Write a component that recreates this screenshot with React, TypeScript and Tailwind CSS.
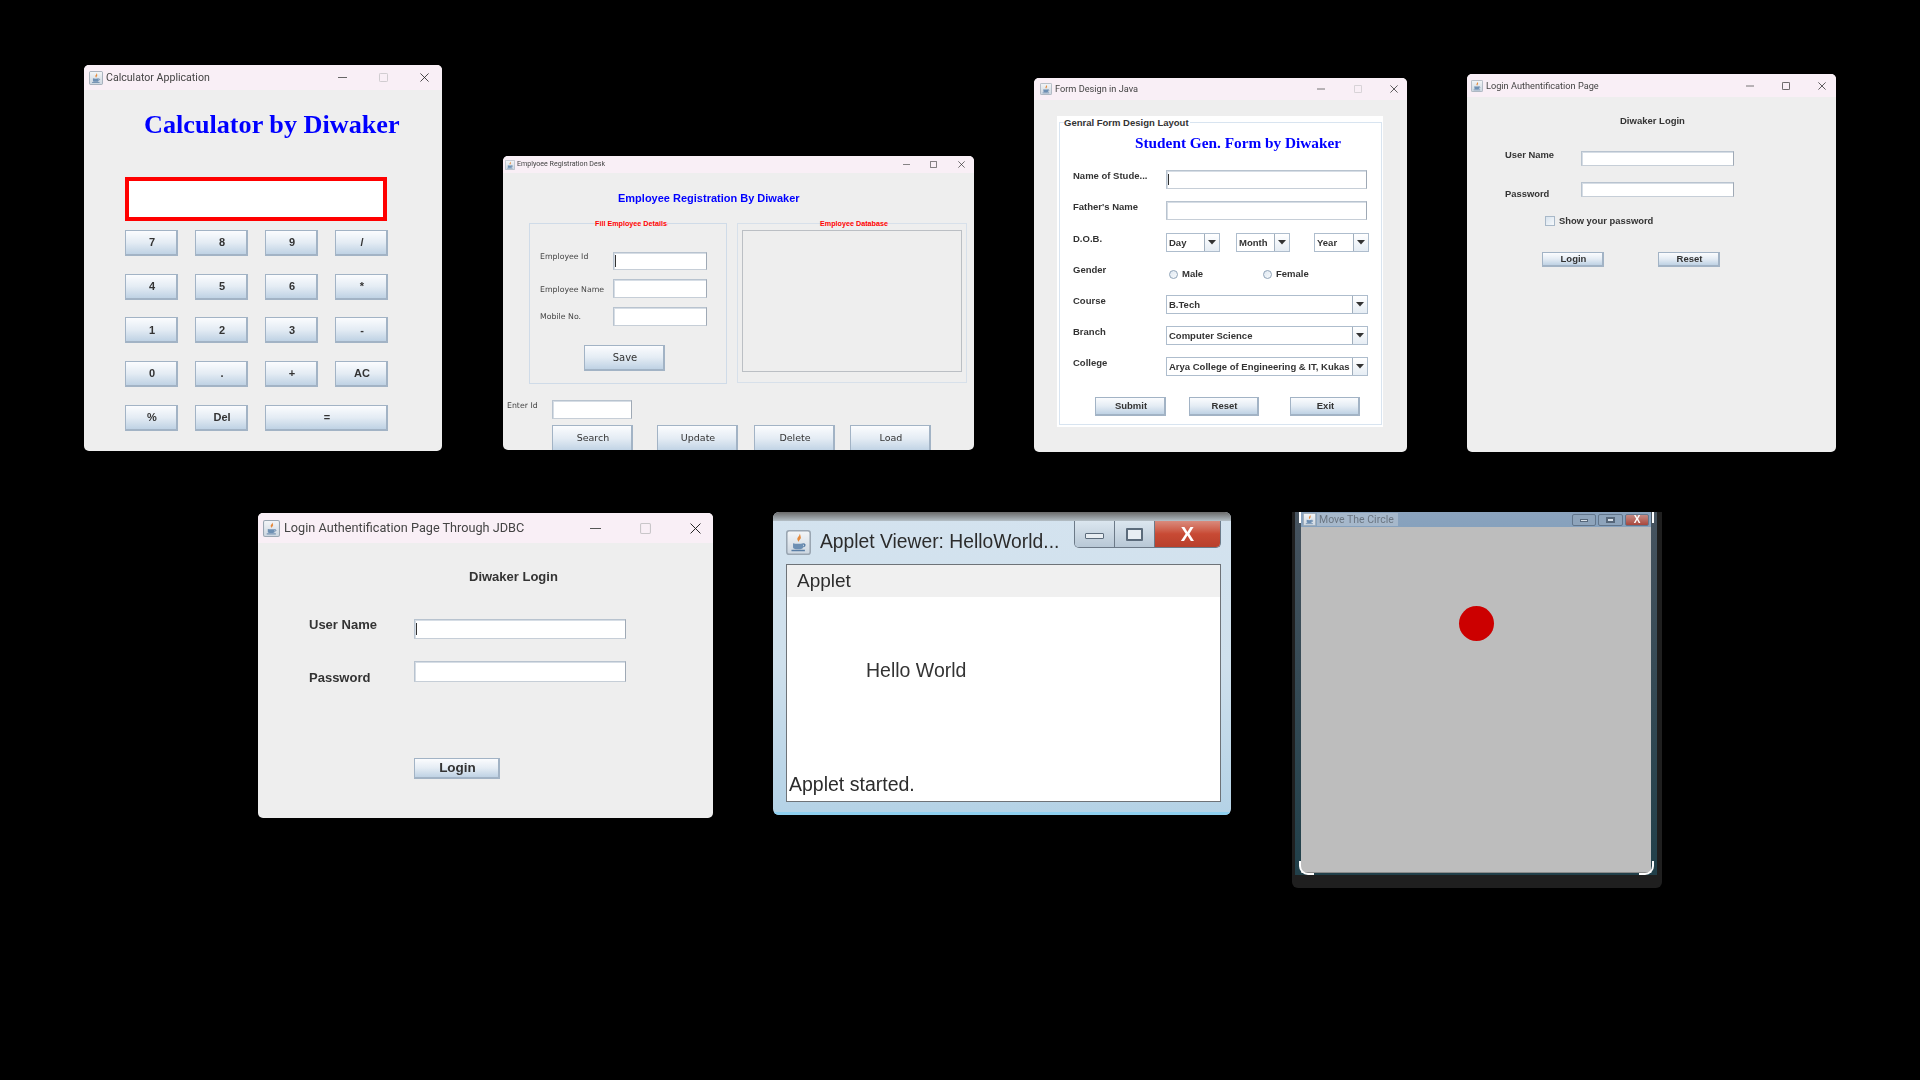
import React from "react";

function JavaIcon({ size }: { size: number }) {
  return (
    <svg width={size} height={size} viewBox="0 0 16 16" className="shrink-0">
      <defs>
        <linearGradient id="jt" x1="0" y1="0" x2="0" y2="1">
          <stop offset="0" stopColor="#f4f6f8" />
          <stop offset="1" stopColor="#ccd6e0" />
        </linearGradient>
      </defs>
      <rect x="0.5" y="0.5" width="15" height="15" rx="1.5" fill="url(#jt)" stroke="#9aa6b2" />
      <path d="M8.6 2.2c.7 1.5-1.8 2.3-1.3 4 .2.6.6 1 .9 1.4-.1-1.2 2-2 1.1-3.6 0-.7-.2-1.3-.7-1.8z" fill="#e58a3c" />
      <path d="M4.5 8.4c1.5.5 5 .5 6.4 0v2.6c0 1-1 1.3-3.2 1.3s-3.2-.3-3.2-1.3z" fill="#6d8fb3" />
      <path d="M10.9 9c1.3-.3 1.8 1.2.2 1.8M3.5 13.1h8.6" fill="none" stroke="#5a7ea5" strokeWidth="0.9" />
    </svg>
  );
}

function Controls({ size, cls, maxOn }: { size: number; cls: string; maxOn?: boolean }) {
  return (
    <div className={"ml-auto flex items-center " + cls}>
      <svg width={size} height={size} viewBox="0 0 10 10">
        <path d="M0 5h10" stroke="#555" strokeWidth="1" />
      </svg>
      <svg width={size} height={size} viewBox="0 0 10 10">
        <rect x="0.5" y="0.5" width="9" height="9" rx="1" fill="none" stroke={maxOn ? "#333" : "#c9c6c9"} strokeWidth="1" />
      </svg>
      <svg width={size} height={size} viewBox="0 0 10 10">
        <path d="M0.5 0.5l9 9M9.5 0.5l-9 9" stroke="#222" strokeWidth="0.9" />
      </svg>
    </div>
  );
}

function Win({
  pos,
  bar,
  iconSize,
  title,
  titleCls,
  ctrlSize,
  ctrlCls,
  maxOn,
  children,
}: {
  pos: string;
  bar: string;
  iconSize: number;
  title: string;
  titleCls: string;
  ctrlSize: number;
  ctrlCls: string;
  maxOn?: boolean;
  children: React.ReactNode;
}) {
  return (
    <div className={"absolute overflow-hidden rounded-[5px] bg-[#eeeeee] blur-[0.35px] flex flex-col font-['Liberation_Sans',sans-serif] " + pos}>
      <div className={"flex shrink-0 items-center bg-[#f9eff6] " + bar}>
        <JavaIcon size={iconSize} />
        <span className={"whitespace-nowrap font-['Roboto',sans-serif] text-[#444] " + titleCls}>{title}</span>
        <Controls size={ctrlSize} cls={ctrlCls} maxOn={maxOn} />
      </div>
      {children}
    </div>
  );
}

function Btn({ cls, children }: { cls: string; children: React.ReactNode }) {
  return (
    <div className={"flex shrink-0 items-center justify-center border border-[#a2b3c5] border-b-2 border-r-2 bg-linear-to-b from-[#fbfcfe] via-[#e4ecf4] to-[#bfd2e4] pl-[2px] text-[#333] " + cls}>
      {children}
    </div>
  );
}

function Field({ cls, caret }: { cls: string; caret?: boolean }) {
  return (
    <div className={"flex shrink-0 items-center border border-[#b8c3cf] border-b-[#c6ced7] border-r-[#9fa9b5] bg-white shadow-[inset_1px_1px_0_#d6dde5] " + cls}>
      {caret && <div className="ml-[1px] h-[70%] w-[1px] bg-[#333]" />}
    </div>
  );
}

function Combo({ cls, text }: { cls: string; text: string }) {
  return (
    <div className={"flex h-[19px] shrink-0 items-stretch border border-[#aebdcd] bg-white text-[9.5px] font-bold text-[#333] " + cls}>
      <span className="flex-1 overflow-hidden whitespace-nowrap pl-[2px] leading-[18px]">{text}</span>
      <div className="flex w-[15px] items-center justify-center border-l border-[#a0aebc] bg-linear-to-b from-white to-[#e6edf4]">
        <svg width="8" height="5" viewBox="0 0 8 5">
          <path d="M0 0h8L4 4.5z" fill="#333" />
        </svg>
      </div>
    </div>
  );
}

function Radio() {
  return <div className="h-[9px] w-[9px] shrink-0 rounded-full border border-[#8fa3b8] bg-linear-to-br from-[#dfe8f1] to-[#f8fafc]" />;
}

function Calculator() {
  const rows = [
    ["7", "8", "9", "/"],
    ["4", "5", "6", "*"],
    ["1", "2", "3", "-"],
    ["0", ".", "+", "AC"],
  ];
  return (
    <Win
      pos="left-[84px] top-[65px] w-[358px] h-[386px]"
      bar="h-[25px] pl-[5px]"
      iconSize={14}
      title="Calculator Application"
      titleCls="ml-[3px] text-[10.6px]"
      ctrlSize={9}
      ctrlCls="gap-[32px] pr-[13px]"
    >
      <div className="flex flex-col pl-[41px]">
        <div className="ml-[19px] mt-[20px] h-[30px] whitespace-nowrap font-['Liberation_Serif',serif] text-[26.2px] font-bold leading-[30px] text-[#0000ff]">
          Calculator by Diwaker
        </div>
        <div className="mt-[37px] h-[44px] w-[262px] border-[4.5px] border-[#ff0000] bg-white" />
        <div className="mt-[9px] grid w-[263px] grid-cols-[53px_53px_53px_53px] gap-x-[17px] gap-y-[17.7px] text-[11px] font-bold">
          {rows.flat().map((k) => (
            <Btn key={k} cls="h-[26px]">
              {k}
            </Btn>
          ))}
          <Btn cls="h-[26px]">%</Btn>
          <Btn cls="h-[26px]">Del</Btn>
          <Btn cls="col-span-2 h-[26px]">=</Btn>
        </div>
      </div>
    </Win>
  );
}

function Employee() {
  return (
    <Win
      pos="left-[503px] top-[156px] w-[471px] h-[294px]"
      bar="h-[17px] pl-[2px]"
      iconSize={10}
      title="Emplyoee Registration Desk"
      titleCls="ml-[2px] text-[7.1px]"
      ctrlSize={7}
      ctrlCls="gap-[20.5px] pr-[9.5px]"
      maxOn
    >
      <div className="ml-[115px] mt-[18px] h-[14px] whitespace-nowrap text-[11px] font-bold leading-[14px] text-[#0000ff]">
        Employee Registration By Diwaker
      </div>
      <div className="ml-[26px] mt-[18px] flex gap-[10px]">
        <div className="relative h-[161px] w-[198px] shrink-0 border border-[#cfdbe8] pl-[10px] pt-[28px]">
          <span className="absolute left-[65px] top-[-5px] bg-[#eeeeee] text-[7.2px] font-bold leading-[9px] text-[#ff0000]">
            Fill Employee Details
          </span>
          <div className="grid grid-cols-[73px_94px] grid-rows-[18px_19px_19px] gap-y-[9px] font-['DejaVu_Sans',sans-serif] text-[7.8px] text-[#444]">
            <span className="-translate-y-[4px] self-center whitespace-nowrap">Employee Id</span>
            <Field cls="h-[18px]" caret />
            <span className="translate-y-[1px] self-center whitespace-nowrap">Employee Name</span>
            <Field cls="h-[19px]" />
            <span className="self-center whitespace-nowrap">Mobile No.</span>
            <Field cls="h-[19px]" />
          </div>
          <Btn cls="ml-[44px] mt-[19px] h-[26px] w-[81px] text-[10px] font-['DejaVu_Sans',sans-serif]">Save</Btn>
        </div>
        <div className="relative h-[160px] w-[230px] shrink-0 border border-[#d7e0ea] px-[4px] pt-[6px]">
          <span className="absolute left-[82px] top-[-5px] bg-[#eeeeee] text-[7.2px] font-bold leading-[9px] text-[#ff0000]">
            Employee Database
          </span>
          <div className="h-[142px] w-[220px] border border-[#bbbfc4]" />
        </div>
      </div>
      <div className="mt-[16px] flex items-start pl-[4px]">
        <span className="mt-[1px] w-[45px] font-['DejaVu_Sans',sans-serif] text-[7.8px] leading-[10px] text-[#444]">Enter Id</span>
        <Field cls="h-[19px] w-[80px]" />
      </div>
      <div className="ml-[49px] mt-[6px] flex font-['DejaVu_Sans',sans-serif] text-[9.5px]">
        <Btn cls="h-[28px] w-[81px]">Search</Btn>
        <Btn cls="ml-[24px] h-[28px] w-[81px]">Update</Btn>
        <Btn cls="ml-[16px] h-[28px] w-[81px]">Delete</Btn>
        <Btn cls="ml-[15px] h-[28px] w-[81px]">Load</Btn>
      </div>
    </Win>
  );
}

function FormRow({ label, children, cls }: { label: string; children: React.ReactNode; cls: string }) {
  return (
    <div className={"flex h-[19px] items-start " + cls}>
      <span className="w-[93px] shrink-0 whitespace-nowrap text-[9.5px] font-bold leading-[11px] text-[#333]">{label}</span>
      {children}
    </div>
  );
}

function FormDesign() {
  return (
    <Win
      pos="left-[1034px] top-[78px] w-[373px] h-[374px]"
      bar="h-[22px] pl-[6px]"
      iconSize={12}
      title="Form Design in Java"
      titleCls="ml-[3px] text-[9.2px]"
      ctrlSize={8}
      ctrlCls="gap-[28.5px] pr-[9px]"
    >
      <div className="ml-[23px] mt-[16px] h-[311px] w-[326px] bg-white px-[2px] pt-[6px]">
        <div className="relative h-[303px] w-[323px] border border-[#d8e4f0] pl-[13px]">
          <span className="absolute left-[4px] top-[-6px] bg-white pr-[1px] text-[9.5px] font-bold leading-[12px] text-[#333]">
            Genral Form Design Layout
          </span>
          <div className="ml-[62px] mt-[10px] h-[20px] whitespace-nowrap font-['Liberation_Serif',serif] text-[15.3px] font-bold leading-[20px] text-[#0000ff]">
            Student Gen. Form by Diwaker
          </div>
          <FormRow label="Name of Stude..." cls="mt-[17px]">
            <Field cls="h-[19px] w-[201px]" caret />
          </FormRow>
          <FormRow label="Father's Name" cls="mt-[12px]">
            <Field cls="h-[19px] w-[201px]" />
          </FormRow>
          <FormRow label="D.O.B." cls="mt-[13px]">
            <Combo cls="w-[54px]" text="Day" />
            <Combo cls="ml-[16px] w-[54px]" text="Month" />
            <Combo cls="ml-[24px] w-[55px]" text="Year" />
          </FormRow>
          <FormRow label="Gender" cls="mt-[12px]">
            <div className="flex w-[97px] items-center pl-[3px] pt-[4px] text-[9.5px] font-bold leading-[12px] text-[#333]">
              <Radio />
              <span className="ml-[4px]">Male</span>
            </div>
            <div className="flex items-center pt-[4px] text-[9.5px] font-bold leading-[12px] text-[#333]">
              <Radio />
              <span className="ml-[4px]">Female</span>
            </div>
          </FormRow>
          <FormRow label="Course" cls="mt-[12px]">
            <Combo cls="w-[202px]" text="B.Tech" />
          </FormRow>
          <FormRow label="Branch" cls="mt-[12px]">
            <Combo cls="w-[202px]" text="Computer Science" />
          </FormRow>
          <FormRow label="College" cls="mt-[12px]">
            <Combo cls="w-[202px]" text="Arya College of Engineering & IT, Kukas" />
          </FormRow>
          <div className="ml-[22px] mt-[21px] flex text-[9.5px] font-bold">
            <Btn cls="h-[19px] w-[71px]">Submit</Btn>
            <Btn cls="ml-[23px] h-[19px] w-[70px]">Reset</Btn>
            <Btn cls="ml-[31px] h-[19px] w-[70px]">Exit</Btn>
          </div>
        </div>
      </div>
    </Win>
  );
}

function Login() {
  return (
    <Win
      pos="left-[1467px] top-[74px] w-[369px] h-[378px]"
      bar="h-[23px] pl-[4px]"
      iconSize={12}
      title="Login Authentification Page"
      titleCls="ml-[3px] text-[9.2px]"
      ctrlSize={8}
      ctrlCls="gap-[28px] pr-[10px]"
      maxOn
    >
      <div className="flex flex-col pl-[38px] font-bold text-[#333]">
        <div className="ml-[115px] mt-[18px] h-[12px] whitespace-nowrap text-[9.5px] leading-[12px]">Diwaker Login</div>
        <div className="mt-[24px] flex h-[15px]">
          <span className="w-[76px] shrink-0 -translate-y-[2px] text-[9.4px] leading-[12px]">User Name</span>
          <Field cls="h-[15px] w-[153px]" />
        </div>
        <div className="mt-[16px] flex h-[15px]">
          <span className="w-[76px] shrink-0 translate-y-[6px] text-[9.4px] leading-[12px]">Password</span>
          <Field cls="h-[15px] w-[153px]" />
        </div>
        <div className="ml-[40px] mt-[19px] flex h-[10px] items-center text-[9.4px]">
          <div className="h-[10px] w-[10px] border border-[#a8b8c8] bg-linear-to-br from-[#d8e3ee] to-[#f6f9fb]" />
          <span className="ml-[4px] whitespace-nowrap">Show your password</span>
        </div>
        <div className="ml-[37px] mt-[26px] flex text-[9.5px]">
          <Btn cls="h-[15px] w-[62px]">Login</Btn>
          <Btn cls="ml-[54px] h-[15px] w-[62px]">Reset</Btn>
        </div>
      </div>
    </Win>
  );
}

function Jdbc() {
  return (
    <Win
      pos="left-[258px] top-[513px] w-[455px] h-[305px]"
      bar="h-[30px] pl-[5px]"
      iconSize={17}
      title="Login Authentification Page Through JDBC"
      titleCls="ml-[4px] text-[12.7px]"
      ctrlSize={11}
      ctrlCls="gap-[39px] pr-[12.5px]"
    >
      <div className="flex flex-col pl-[51px] font-bold text-[#333]">
        <div className="ml-[160px] mt-[26px] h-[16px] whitespace-nowrap text-[13px] leading-[16px]">Diwaker Login</div>
        <div className="mt-[34px] flex h-[20px]">
          <span className="w-[105px] shrink-0 -translate-y-[2px] text-[13px] leading-[16px]">User Name</span>
          <Field cls="h-[20px] w-[212px]" caret />
        </div>
        <div className="mt-[22px] flex h-[21px]">
          <span className="w-[105px] shrink-0 translate-y-[9px] text-[13px] leading-[16px]">Password</span>
          <Field cls="h-[21px] w-[212px]" />
        </div>
        <Btn cls="ml-[105px] mt-[76px] h-[21px] w-[86px] text-[13.5px]">Login</Btn>
      </div>
    </Win>
  );
}

function Applet() {
  return (
    <div className="absolute left-[773px] top-[512px] flex h-[303px] w-[458px] flex-col overflow-hidden rounded-[6px] bg-linear-to-b from-[#d4e3ef] via-[#cfe0ec] to-[#b4d2e6] font-['Liberation_Sans',sans-serif] blur-[0.5px]">
      <div className="h-[9px] shrink-0 bg-linear-to-b from-[#6a6a6a] to-[#b4bfc6]" />
      <div className="flex h-[43px] shrink-0 items-start pl-[13px] pr-[10px]">
        <div className="mt-[9px]">
          <JavaIcon size={25} />
        </div>
        <span className="ml-[9px] mt-[9px] whitespace-nowrap text-[19.3px] leading-[24px] text-[#2c2c2c]">Applet Viewer: HelloWorld...</span>
        <div className="ml-auto flex h-[27px] w-[147px] shrink-0 overflow-hidden rounded-b-[5px] border border-t-0 border-[#6c7a88]">
          <div className="flex w-[40px] shrink-0 items-center justify-center border-r border-[#6c7a88] bg-linear-to-b from-[#dbe6ef] to-[#b8c8d6]">
            <div className="mt-[3px] h-[6px] w-[19px] rounded-[1px] border border-[#5b6b7b] bg-[#e8eef3]" />
          </div>
          <div className="flex w-[40px] shrink-0 items-center justify-center border-r border-[#6c7a88] bg-linear-to-b from-[#dbe6ef] to-[#b8c8d6]">
            <div className="h-[13px] w-[17px] rounded-[1px] border-2 border-[#5b6b7b] bg-[#e8eef3]" />
          </div>
          <div className="flex flex-1 items-center justify-center bg-linear-to-b from-[#d98a7c] via-[#c84a34] to-[#b8402c] text-[20px] font-bold leading-none text-white">
            X
          </div>
        </div>
      </div>
      <div className="mb-[10px] ml-[13px] mr-[10px] flex flex-1 flex-col border border-[#6e7378] bg-white">
        <div className="flex h-[32px] shrink-0 items-center bg-[#f0f0f0] pl-[10px] text-[19px] text-[#2c2c2c]">Applet</div>
        <div className="ml-[79px] mt-[61px] h-[24px] whitespace-nowrap text-[19.5px] leading-[24px] text-[#333]">Hello World</div>
        <div className="mb-[5px] ml-[2px] mt-auto h-[24px] whitespace-nowrap text-[19.5px] leading-[24px] text-[#2c2c2c]">Applet started.</div>
      </div>
      <div className="h-[3px] shrink-0 bg-[#8fd0f0]" />
    </div>
  );
}

function Circle() {
  return (
    <div className="absolute left-[1292px] top-[512px] h-[376px] w-[370px] overflow-hidden rounded-b-[6px] bg-[#1f1f1f] font-['Liberation_Sans',sans-serif] blur-[0.4px]">
      <div className="relative ml-[3px] flex h-[363px] w-[362px] flex-col bg-linear-to-b from-[#46535f] to-[#21404a] px-[6px]">
        <div className="flex h-[15px] shrink-0 items-center bg-linear-to-b from-[#8ba3bd] to-[#86a1bd] pl-[2px]">
          <JavaIcon size={13} />
          <span className="ml-[1px] flex h-[13px] w-[81px] items-center bg-[#a6b8cb] pl-[2px] font-['Roboto',sans-serif] text-[10.5px] text-[#6b7682]">
            Move The Circle
          </span>
          <div className="ml-auto mr-[2px] flex items-center gap-[2px]">
            <div className="flex h-[12px] w-[24px] items-center justify-center rounded-[2px] border border-[#62768c] bg-[#8ea4bb]">
              <div className="mt-[2px] h-[3px] w-[8px] border border-[#56677a] bg-[#d8e0e8]" />
            </div>
            <div className="flex h-[12px] w-[25px] items-center justify-center rounded-[2px] border border-[#62768c] bg-[#8ea4bb]">
              <div className="h-[6px] w-[9px] border-2 border-[#56677a] bg-[#d8e0e8]" />
            </div>
            <div className="flex h-[12px] w-[24px] items-center justify-center rounded-[2px] border border-[#62768c] bg-linear-to-b from-[#c58a84] to-[#a8463c] text-[10px] font-bold leading-none text-white">
              X
            </div>
          </div>
        </div>
        <div className="relative h-[346px] w-[350px] border-b border-[#8c8c8c] bg-[#bdbdbd]">
          <div className="absolute left-[158px] top-[79px] h-[35px] w-[35px] rounded-full bg-[#cc0000]" />
        </div>
        <div className="absolute bottom-0 left-[4px] h-[14px] w-[15px] rounded-bl-[9px] border-b-[2.5px] border-l-[2.5px] border-white" />
        <div className="absolute bottom-0 right-[3px] h-[14px] w-[15px] rounded-br-[9px] border-b-[2.5px] border-r-[2.5px] border-white" />
        <div className="absolute left-[4px] top-0 h-[11px] w-[2px] bg-white" />
        <div className="absolute right-[3px] top-0 h-[11px] w-[2px] bg-white" />
      </div>
    </div>
  );
}

export default function App() {
  return (
    <div className="relative h-[1080px] w-[1920px] overflow-hidden bg-black">
      <Calculator />
      <Employee />
      <FormDesign />
      <Login />
      <Jdbc />
      <Applet />
      <Circle />
    </div>
  );
}
